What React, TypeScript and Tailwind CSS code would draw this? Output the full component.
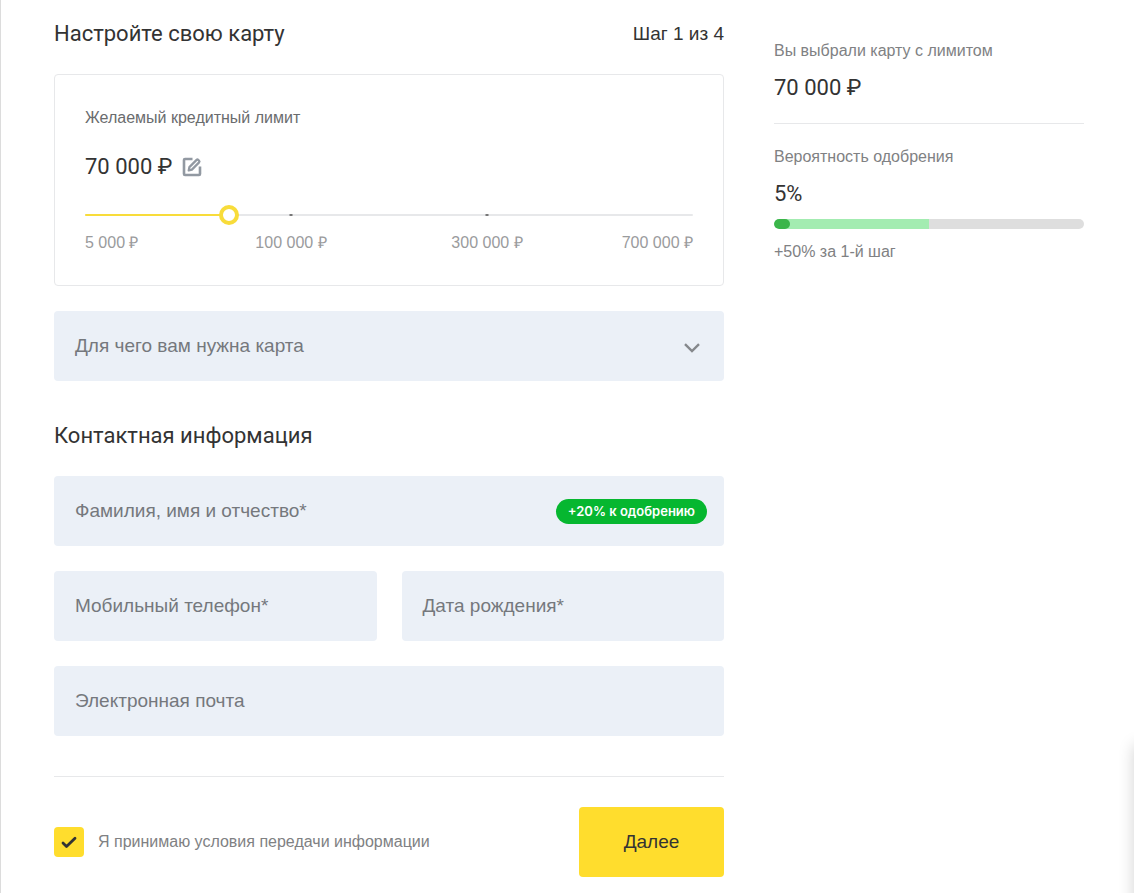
import { useState, type ReactNode } from 'react';

interface FieldProps {
  id: string;
  label: string;
  type?: string;
  children?: ReactNode;
}

// Slider runs over three equal stretches, each with its own money scale
const stops = [5000, 100000, 300000, 700000];
const STEP = 1000;

const toPosition = (amount: number) => {
  const i = amount >= stops[2] ? 2 : amount >= stops[1] ? 1 : 0;
  return (i + (amount - stops[i]) / (stops[i + 1] - stops[i])) * STEP;
};

const toAmount = (position: number) => {
  const i = Math.min(Math.floor(position / STEP), 2);
  const value = stops[i] + (position / STEP - i) * (stops[i + 1] - stops[i]);
  return Math.round(value / 1000) * 1000;
};

const formatMoney = (value: number) =>
  `${String(value).replace(/\B(?=(\d{3})+$)/g, '\u00a0')}\u00a0₽`;

const Field: React.FC<FieldProps> = ({ id, label, type = 'text', children }) => (
  <div className="relative flex h-[70px] items-center rounded bg-[#ebf0f7]">
    <input
      id={id}
      type={type}
      placeholder=" "
      className="peer h-full w-full min-w-0 flex-1 bg-transparent pr-4 pl-[21px] text-[19px] leading-7 text-[#333] outline-none"
    />
    <label
      htmlFor={id}
      className="pointer-events-none invisible absolute left-[21px] text-[19px] leading-7 text-[#75787d] peer-placeholder-shown:visible"
    >
      {label}
    </label>
    {children}
  </div>
);

const LimitCard: React.FC<{ amount: number; onChange: (amount: number) => void }> = ({
  amount,
  onChange,
}) => {
  const position = toPosition(amount);

  return (
    <section className="mt-6 rounded border border-[#e7e8ea] px-[30px] pt-[31px] pb-[30px]">
      <label htmlFor="limit" className="block text-base leading-6 text-[#6a6c6e]">
        Желаемый кредитный лимит
      </label>
      <div className="mt-[21px] flex items-center gap-[10px]">
        <span className="font-[Roboto] text-[22px] leading-8 text-[#333]">
          {formatMoney(amount)}
        </span>
        <button type="button" aria-label="Изменить лимит" className="text-[#9299a2]">
          <svg width="20" height="20" viewBox="0 0 20 20" fill="none" stroke="currentColor">
            <path d="M10.5 2H3Q2 2 2 3V17Q2 18 3 18H17Q18 18 18 17V9.5" strokeWidth="2.6" />
            <path
              d="M6.7 13.4 7.4 10.1 14.6 2.9Q15.4 2.1 16.2 2.9L17.1 3.8Q17.9 4.6 17.1 5.4L9.9 12.6Z"
              strokeWidth="2.2"
              strokeLinejoin="round"
            />
          </svg>
        </button>
      </div>
      <div className="relative mt-[22px] h-5">
        <div className="absolute inset-x-0 top-[9px] h-0.5 rounded-full bg-[#e7e8ea]" />
        <div className="absolute inset-x-[10px] top-[9px] h-0.5">
          <span className="absolute left-1/3 h-0.5 w-[3px] -translate-x-1/2 bg-[#777]" />
          <span className="absolute left-2/3 h-0.5 w-[3px] -translate-x-1/2 bg-[#777]" />
          <div
            className="-ml-[10px] h-0.5 rounded-full bg-[#f8dc3a]"
            style={{ width: `calc(${position / 30}% + 10px)` }}
          />
        </div>
        <input
          id="limit"
          type="range"
          min={0}
          max={3000}
          value={position}
          step="any"
          onChange={(e) => onChange(toAmount(Number(e.target.value)))}
          className="absolute inset-0 h-5 w-full cursor-pointer appearance-none bg-transparent [&::-webkit-slider-thumb]:h-5 [&::-webkit-slider-thumb]:w-5 [&::-webkit-slider-thumb]:appearance-none [&::-webkit-slider-thumb]:rounded-full [&::-webkit-slider-thumb]:border-4 [&::-webkit-slider-thumb]:border-[#f8dc3a] [&::-webkit-slider-thumb]:bg-white"
        />
      </div>
      <div className="mt-[6px] grid grid-cols-6 px-[10px] text-base leading-6 whitespace-nowrap text-[#9a9b9d]">
        <span className="-ml-[10px]">{formatMoney(stops[0])}</span>
        <span className="col-span-2 text-center">{formatMoney(stops[1])}</span>
        <span className="col-span-2 text-center">{formatMoney(stops[2])}</span>
        <span className="-mr-[10px] flex justify-end">{formatMoney(stops[3])}</span>
      </div>
    </section>
  );
};

const Summary: React.FC<{ amount: number }> = ({ amount }) => (
  <aside className="w-[310px] shrink-0 pt-[39px] text-base leading-6 text-[#808183]">
    <p>Вы выбрали карту с лимитом</p>
    <p className="mt-[9px] font-[Roboto] text-[22px] leading-8 text-[#333]">
      {formatMoney(amount)}
    </p>
    <hr className="mt-[19px] border-[#e7e8ea]" />
    <p className="mt-[21px]">Вероятность одобрения</p>
    <p className="mt-[9px] font-[Roboto] text-[22px] leading-8 text-[#333]">5%</p>
    <div className="mt-[9px] h-[10px] overflow-hidden rounded-full bg-[#dedede]">
      <div className="h-full w-1/2 bg-[#a3ecb1]">
        <div className="h-full w-[10%] rounded-full bg-[#3bb54a]" />
      </div>
    </div>
    <p className="mt-[11px]">+50% за 1-й шаг</p>
  </aside>
);

export default function App() {
  const [amount, setAmount] = useState(70000);
  const [purpose, setPurpose] = useState('');
  const [accepted, setAccepted] = useState(true);

  return (
    <div className="relative flex min-h-screen gap-[50px] overflow-hidden border-l border-[#dcdcdc] bg-white pr-[50px] pl-[53px] font-['Liberation_Sans',sans-serif]">
      <form className="min-w-0 flex-1 pb-4" onSubmit={(e) => e.preventDefault()}>
        <div className="flex items-center justify-between pt-[18px] text-[#333]">
          <h1 className="font-[Roboto] text-[22px] leading-8">Настройте свою карту</h1>
          <span className="text-[19px]">Шаг 1 из 4</span>
        </div>

        <LimitCard amount={amount} onChange={setAmount} />

        <div className="relative mt-[25px] flex items-center">
          <select
            id="purpose"
            value={purpose}
            onChange={(e) => setPurpose(e.target.value)}
            className="block h-[70px] w-full appearance-none rounded bg-[#ebf0f7] px-[21px] text-[19px] leading-7 text-[#333] outline-none"
          >
            <option value="" />
          </select>
          {!purpose && (
            <label
              htmlFor="purpose"
              className="pointer-events-none absolute left-[21px] text-[19px] leading-7 text-[#75787d]"
            >
              Для чего вам нужна карта
            </label>
          )}
          <svg
            className="pointer-events-none absolute top-[31px] right-6"
            width="16"
            height="12"
            viewBox="0 0 16 12"
            fill="none"
            stroke="#85888c"
            strokeWidth="2.4"
          >
            <path d="M1 2.2 8 9 15 2.2" />
          </svg>
        </div>

        <h2 className="mt-[39px] font-[Roboto] text-[22px] leading-8 text-[#333]">
          Контактная информация
        </h2>

        <div className="mt-6 grid gap-[25px]">
          <Field id="name" label="Фамилия, имя и отчество*">
            <span className="mr-[17px] rounded-full bg-[#06b730] px-3 font-[Inter] text-[13px] leading-[25px] font-semibold text-white">
              +20% к одобрению
            </span>
          </Field>
          <div className="grid grid-cols-2 gap-[25px]">
            <Field id="phone" label="Мобильный телефон*" type="tel" />
            <Field id="birthday" label="Дата рождения*" />
          </div>
          <Field id="email" label="Электронная почта" type="email" />
        </div>

        <hr className="mt-10 border-[#e7e8ea]" />

        <div className="mt-[30px] flex items-center justify-between">
          <label className="flex items-center gap-[14px] text-base text-[#808183]">
            <span className="relative h-[30px] w-[30px]">
              <input
                type="checkbox"
                checked={accepted}
                onChange={(e) => setAccepted(e.target.checked)}
                className="block h-[30px] w-[30px] appearance-none rounded bg-[#ebf0f7] checked:bg-[#ffdd2d]"
              />
              {accepted && (
                <svg
                  className="pointer-events-none absolute inset-0"
                  width="30"
                  height="30"
                  viewBox="0 0 30 30"
                  fill="none"
                  stroke="#333"
                  strokeWidth="2.8"
                  strokeLinecap="round"
                  strokeLinejoin="round"
                >
                  <path d="M9 16 12.5 19.5 21 11.2" />
                </svg>
              )}
            </span>
            Я принимаю условия передачи информации
          </label>
          <button
            type="submit"
            className="h-[70px] w-[145px] rounded bg-[#ffdd2d] text-[19px] text-[#333]"
          >
            Далее
          </button>
        </div>
      </form>

      <Summary amount={amount} />

      {/* shadow of the panel docked past the right edge */}
      <div className="absolute top-[745px] left-full h-[300px] w-10 shadow-[0_0_16px_rgba(0,0,0,0.18)]" />
    </div>
  );
}
